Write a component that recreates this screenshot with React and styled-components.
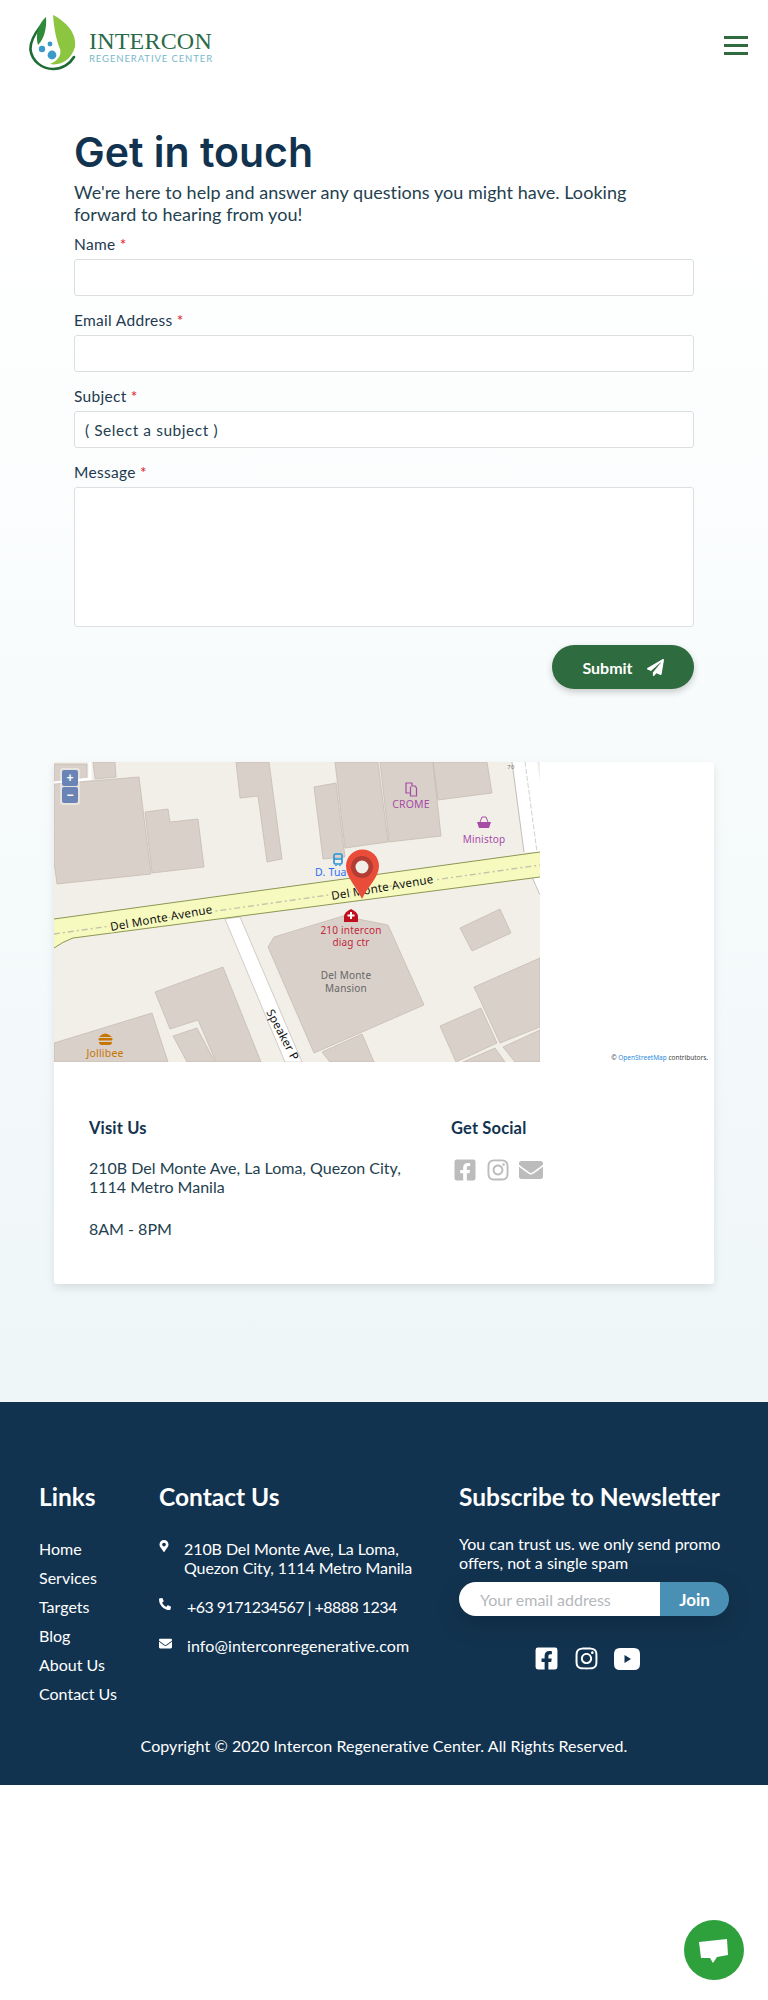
import React from "react";
import styled, { createGlobalStyle } from "styled-components";
import { FaFacebookSquare, FaInstagram, FaEnvelope, FaMapMarkerAlt, FaPhoneAlt, FaPaperPlane } from "react-icons/fa";

const Global = createGlobalStyle`
  html, body { margin: 0; padding: 0; background: #fff; }
  * { box-sizing: border-box; }
  body { font-family: "Lato", "Liberation Sans", sans-serif; color: #12334f; }
`;
const Page = styled.div`width: 768px; background: linear-gradient(180deg, #ffffff 0, #ffffff 200px, #eef6f8 1402px);`;
const Header = styled.header`height: 86px; padding: 14px 20px 0 29px; display: flex; justify-content: space-between; align-items: flex-start;`;
const Logo = styled.div`display: flex; gap: 12px; align-items: flex-start;`;
const LogoText = styled.div`display: flex; flex-direction: column; padding-top: 15px;`;
const LogoName = styled.span`font: 400 24px/24px "Liberation Serif", serif; color: #2a6a48; letter-spacing: 0.2px; white-space: nowrap;`;
const LogoSub = styled.span`font: 400 9.5px/10px "Lato", sans-serif; color: #79b9c9; letter-spacing: 0.9px; white-space: nowrap; margin-top: 1px;`;
const Burger = styled.div`display: flex; flex-direction: column; gap: 5px; margin-top: 22px; width: 24px;`;
const Bar = styled.span`display: block; height: 3px; background: #2f6b3f;`;
const Form = styled.form`padding: 42px 74px 0; display: flex; flex-direction: column;`;
const Title = styled.h1`margin: 0 0 5px; font: 600 41px/48px "Inter", sans-serif; letter-spacing: 0; color: #12334f;`;
const Intro = styled.p`margin: 0 0 9px; max-width: 585px; font: 400 18px/22px "Lato", sans-serif; letter-spacing: 0.05px; color: #24414f;`;
const Field = styled.div`margin-bottom: 15px;`;
const Label = styled.label`display: block; font: 400 15.5px/20px "Lato", sans-serif; letter-spacing: 0.3px; color: #1d3a50; margin-bottom: 5px;`;
const Req = styled.span`color: #e0202a;`;
const Input = styled.input`display: block; width: 100%; height: 37px; margin-bottom: -1px; border: 1px solid #dcdfe2; border-radius: 3px; background: #fff; padding: 0 11px;`;
const Select = styled.select`display: block; width: 100%; height: 37px; margin-bottom: -1px; border: 1px solid #dcdfe2; border-radius: 3px; background: #fff; padding: 0 10px; appearance: none; font: 400 15.5px "Lato", sans-serif; letter-spacing: 0.55px; color: #24414f;`;
const Area = styled.textarea`display: block; width: 100%; height: 140px; border: 1px solid #dcdfe2; border-radius: 3px; background: #fff; resize: none;`;
const Actions = styled.div`display: flex; justify-content: flex-end; margin-top: 3px;`;
const Submit = styled.button`width: 142px; height: 44px; border: 0; border-radius: 22px; background: #2e6b3e; color: #fff; font: 700 16px "Lato", sans-serif; display: flex; align-items: center; justify-content: center; gap: 14px; box-shadow: 0 3px 7px rgba(0,0,0,.2);`;
const Card = styled.section`margin: 73px 54px 118px; background: #fff; border-radius: 3px; box-shadow: 0 4px 8px rgba(0,0,0,.1);`;
const MapBox = styled.div`position: relative; height: 300px;`;
const MapArt = styled.svg`display: block; width: 486px; height: 300px;`;
const Zoom = styled.div`position: absolute; left: 6px; top: 6px; padding: 2px; background: rgba(255,255,255,.4); border-radius: 3px; display: flex; flex-direction: column; gap: 1px;`;
const ZoomBtn = styled.span`display: flex; width: 16px; height: 16px; align-items: center; justify-content: center; background: #6a84b5; color: #fff; font: 700 12px/16px "Liberation Sans", sans-serif; border-radius: 2px;`;
const Attribution = styled.div`position: absolute; right: 6px; bottom: -1px; font: 400 6.5px/10px "Noto Sans", sans-serif; color: #444;`;
const OsmLink = styled.span`color: #2b8de0;`;
const Info = styled.div`display: grid; grid-template-columns: 362px 1fr; padding: 56px 0 46px 35px;`;
const InfoTitle = styled.h3`margin: 0 0 20px; font: 700 16.5px/20px "Lato", sans-serif; letter-spacing: 0.15px; color: #12334f;`;
const InfoText = styled.p`margin: 0 0 23px; font: 400 16px/19px "Lato", sans-serif; color: #24414f; &:last-child { margin-bottom: 0; }`;
const GrayIcons = styled.div`display: flex; gap: 9px; margin: 3px 0 0 2px; color: #bcbcbc; align-items: center; height: 24px;`;
const Footer = styled.footer`background: #12334f; color: #fff; padding: 80px 39px 27px; `;
const Cols = styled.div`display: flex;`;
const LinksCol = styled.div`width: 120px;`;
const ContactCol = styled.div`width: 300px;`;
const SubCol = styled.div`width: 270px;`;
const FootTitle = styled.h3`margin: 0; font: 700 24.5px/30px "Lato", sans-serif; color: #fff; white-space: nowrap;`;
const LinkList = styled.ul`list-style: none; margin: 22px 0 0; padding: 0;`;
const LinkItem = styled.li`font: 400 16px/29px "Lato", sans-serif;`;
const ContactList = styled.div`display: flex; flex-direction: column; gap: 20px; margin-top: 27px;`;
const ContactItem = styled.div`display: flex; gap: 15px; font: 400 16px/19px "Lato", sans-serif; align-items: flex-start; letter-spacing: ${p => p.$track || 0}px; white-space: nowrap;`;
const ContactIcon = styled.span`display: flex; width: ${p => p.$w}px; height: 14px; flex: none; margin-top: 1px;`;
const SubText = styled.p`margin: 22px 0 10px; font: 400 16px/19px "Lato", sans-serif;`;
const Join = styled.div`display: flex; height: 34px; border-radius: 17px; overflow: hidden; box-shadow: 0 8px 24px rgba(0,0,0,.18);`;
const JoinInput = styled.input`width: 201px; border: 0; padding: 0 0 0 21px; font: 400 16px "Lato", sans-serif; &::placeholder { color: #b4b8bc; opacity: 1; }`;
const JoinBtn = styled.button`flex: 1; border: 0; background: #4a90b5; color: #fff; font: 700 17px "Lato", sans-serif;`;
const SocialRow = styled.div`display: flex; justify-content: center; align-items: center; gap: 15px; margin-top: 30px; margin-left: -15px;`;
const Copyright = styled.div`text-align: center; font: 400 16px/24px "Lato", sans-serif; letter-spacing: 0.06px; margin-top: 26px;`;
const Chat = styled.div`position: fixed; right: 24px; bottom: 20px; width: 60px; height: 60px; border-radius: 50%; background: #2ea03c; display: flex;`;

const B = ({ p }) => <polygon points={p} fill="#d9d0c9" stroke="#c2b8ae" strokeWidth="0.7" />;
const L = ({ x, y, c, children, a = "middle", s = 10, halo = "none" }) => (
  <text x={x} y={y} fill={c} fontSize={s} textAnchor={a} fontFamily="Noto Sans, sans-serif" letterSpacing=".2" stroke={halo} strokeWidth={halo === "none" ? 0 : 3} paintOrder="stroke">{children}</text>
);

const MapSvg = () => (
  <MapArt viewBox="0 0 486 300">
    <rect width="486" height="300" fill="#f2efe9" />
    <B p="0,2 33,2 33,18 0,21" />
    <path d="M0 21 L36 17 L36 0" stroke="#fff" strokeWidth="3" fill="none" />
    <B p="39,0 61,0 62,15 41,17" />
    <B p="0,22 85,15 97,112 3,122 0,100" />
    <B p="91,50 114,47 116,60 144,57 150,105 98,111" />
    <B p="182,0 215,0 228,97 213,100 204,34 186,36" />
    <B p="260,25 282,21 291,95 269,97" />
    <B p="281,0 324,0 334,80 291,86" />
    <B p="326,0 379,0 387,74 335,80" />
    <B p="379,0 433,0 438,31 384,38" />
    <B p="101,230 169,205 207,300 162,300 144,258 116,267" />
    <B p="119,274 143,266 161,300 133,300" />
    <B p="0,281 98,251 114,300 0,300" />
    <B p="214,185 220,175 289,154 334,163 370,243 260,291" />
    <B p="268,290 308,272 320,300 276,300" />
    <B p="406,166 446,147 457,171 418,189" />
    <B p="420,225 486,196 486,265 446,281" />
    <B p="386,264 427,246 443,281 402,300" />
    <B p="449,285 486,268 486,300 461,300" />
    <B p="409,300 441,286 451,300" />
    <polygon points="171,157 186,155 248,300 231,300" fill="#fff" stroke="#b5aea6" strokeWidth=".6" />
    <polygon points="458,0 483,0 486,20 486,90 470,90" fill="#fff" />
    <path d="M458 0 L470 90" stroke="#aaa59d" strokeWidth=".7" />
    <path d="M471 0 L483 90" stroke="#bbb" strokeWidth=".7" strokeDasharray="5 2" fill="none" />
    <polygon points="478,115 486,115 486,135" fill="#fff" />
    <path d="M478 115 L486 133" stroke="#aaa59d" strokeWidth=".7" />
    <path d="M0 157 L486 90 L486 115 L19 176 Q8 180 0 186 Z" fill="#f7fabf" />
    <path d="M0 157 L486 90" stroke="#8b9752" strokeWidth="1" fill="none" />
    <path d="M486 115 L19 176 Q8 180 0 186" stroke="#8b9752" strokeWidth="1" fill="none" />
    <path d="M0 172 L486 103" stroke="#c4c4ac" strokeWidth="1.4" strokeDasharray="6 3 2 3" fill="none" />
    <g transform="translate(57 169) rotate(-10)"><L x="0" y="0" a="start" c="#111" s={11.6} halo="#f7fabf">Del Monte Avenue</L></g>
    <g transform="translate(278 138) rotate(-9.5)"><L x="0" y="0" a="start" c="#111" s={11.6} halo="#f7fabf">Del Monte Avenue</L></g>
    <g transform="translate(212 250) rotate(62)"><L x="0" y="0" a="start" c="#111" s={11.6}>Speaker P</L></g>
    <L x="357" y="46" c="#a64ca6" s={10.5}>CROME</L>
    <path d="M352 21 h6 v3 h3 l1.5 2 v8 h-6 v-3 h-4.5 z M356.5 24.5 v9" fill="none" stroke="#a64ca6" strokeWidth="1.2" />
    <L x="430" y="81" c="#a64ca6" s={10}>Ministop</L>
    <path d="M423 60 h14 l-2 6 h-10 z" fill="#a64ca6" /><path d="M426 60 l2-5 M434 60 l-2-5 M428 55 h4" stroke="#a64ca6" strokeWidth="1" fill="none" />
    <L x="261" y="114" a="start" c="#2a6ef0" s={10.5}>D. Tua</L>
    <rect x="280" y="92" width="8" height="10" rx="1.5" fill="none" stroke="#2592d6" strokeWidth="1.6" /><path d="M280 97 h8 M282 103 v1 M286 103 v1" stroke="#2592d6" strokeWidth="1.5" />
    <L x="297" y="172" c="#c2263c" s={10}>210 intercon</L>
    <L x="297" y="184" c="#c2263c" s={10}>diag ctr</L>
    <path d="M290 160 v-5 q0-5 7-8 q7 3 7 8 v5 z" fill="#bf0f1e" /><path d="M297 150 v7 M293.5 153.5 h7" stroke="#fff" strokeWidth="2" />
    <L x="292" y="217" c="#666" s={10}>Del Monte</L>
    <L x="292" y="230" c="#666" s={10}>Mansion</L>
    <path d="M45 275 q6-7 13 0 z M45 280 h13 q0 3-3 3 h-7 q-3 0-3-3 z" fill="#c77400" /><rect x="44.500" y="276" width="14" height="2.500" rx="1" fill="#c77400" />
    <L x="51" y="295" c="#c77400" s={10.5}>Jollibee</L>
    <L x="457" y="7" c="#777" s={6}>70</L>
    <path d="M308 137 C303 125 292 116 292 104 A16.500 16.500 0 0 1 325 104 C325 116 313 125 308 137 Z" fill="#ea4c3a" />
    <circle cx="308" cy="105" r="11" fill="#b13d35" />
    <circle cx="308" cy="105" r="6.500" fill="#f2efe9" />
  </MapArt>
);

const LogoMark = () => (
  <svg width="48" height="57" viewBox="0 0 48 57">
    <path d="M11 13 C4 22 1 29 1.500 36 C3 47 13 55 24 55 C33 55 41 50 45 43" fill="none" stroke="#1f6b35" strokeWidth="2.6" strokeLinecap="round" />
    <path d="M17 3 C9 10 6 21 9 31 C15 25 18 14 17 3 Z" fill="#2f8a3a" />
    <path d="M24 1 C25 14 27 25 31 35 C33 42 28 47 21 50 C32 52 42 46 46 33 C48 20 38 8 24 1 Z" fill="#8cc640" />
    <circle cx="13" cy="35" r="3.200" fill="#3a9cc6" />
    <circle cx="21" cy="30" r="2.400" fill="#3a9cc6" />
    <circle cx="23" cy="41" r="4.400" fill="#3a9cc6" />
  </svg>
);

const YoutubeIcon = () => (
  <svg width="26" height="22" viewBox="0 0 26 22">
    <path fillRule="evenodd" d="M6 0 H20 Q26 0 26 6 V16 Q26 22 20 22 H6 Q0 22 0 16 V6 Q0 0 6 0 Z M10.500 7 V15 L17 11 Z" fill="#fff" />
  </svg>
);

export default function App() {
  return (
    <>
      <Global />
      <Page>
        <Header>
          <Logo>
            <LogoMark />
            <LogoText>
              <LogoName>INTERCON</LogoName>
              <LogoSub>REGENERATIVE CENTER</LogoSub>
            </LogoText>
          </Logo>
          <Burger><Bar /><Bar /><Bar /></Burger>
        </Header>
        <Form onSubmit={e => e.preventDefault()}>
          <Title>Get in touch</Title>
          <Intro>We're here to help and answer any questions you might have. Looking forward to hearing from you!</Intro>
          <Field><Label>Name <Req>*</Req></Label><Input /></Field>
          <Field><Label>Email Address <Req>*</Req></Label><Input /></Field>
          <Field><Label>Subject <Req>*</Req></Label><Select><option>( Select a subject )</option></Select></Field>
          <Field><Label>Message <Req>*</Req></Label><Area /></Field>
          <Actions><Submit>Submit <FaPaperPlane size={17} /></Submit></Actions>
        </Form>
        <Card>
          <MapBox>
            <MapSvg />
            <Zoom><ZoomBtn>+</ZoomBtn><ZoomBtn>−</ZoomBtn></Zoom>
            <Attribution>© <OsmLink>OpenStreetMap</OsmLink> contributors.</Attribution>
          </MapBox>
          <Info>
            <div>
              <InfoTitle>Visit Us</InfoTitle>
              <InfoText>210B Del Monte Ave, La Loma, Quezon City,<br />1114 Metro Manila</InfoText>
              <InfoText>8AM - 8PM</InfoText>
            </div>
            <div>
              <InfoTitle>Get Social</InfoTitle>
              <GrayIcons>
                <FaFacebookSquare size={24} />
                <FaInstagram size={24} />
                <FaEnvelope size={24} />
              </GrayIcons>
            </div>
          </Info>
        </Card>
        <Footer>
          <Cols>
            <LinksCol>
              <FootTitle>Links</FootTitle>
              <LinkList>
                {["Home", "Services", "Targets", "Blog", "About Us", "Contact Us"].map(l => <LinkItem key={l}>{l}</LinkItem>)}
              </LinkList>
            </LinksCol>
            <ContactCol>
              <FootTitle>Contact Us</FootTitle>
              <ContactList>
                <ContactItem $track={-0.08}><ContactIcon $w={10}><FaMapMarkerAlt size={12} /></ContactIcon><span>210B Del Monte Ave, La Loma,<br />Quezon City, 1114 Metro Manila</span></ContactItem>
                <ContactItem $track={-0.55}><ContactIcon $w={13}><FaPhoneAlt size={12} /></ContactIcon><span>+63 9171234567 | +8888 1234</span></ContactItem>
                <ContactItem $track={0.1}><ContactIcon $w={13}><FaEnvelope size={13} /></ContactIcon><span>info@interconregenerative.com</span></ContactItem>
              </ContactList>
            </ContactCol>
            <SubCol>
              <FootTitle>Subscribe to Newsletter</FootTitle>
              <SubText>You can trust us. we only send promo offers, not a single spam</SubText>
              <Join>
                <JoinInput placeholder="Your email address" />
                <JoinBtn>Join</JoinBtn>
              </Join>
              <SocialRow>
                <FaFacebookSquare size={25} />
                <FaInstagram size={25} />
                <YoutubeIcon />
              </SocialRow>
            </SubCol>
          </Cols>
          <Copyright>Copyright © 2020 Intercon Regenerative Center. All Rights Reserved.</Copyright>
        </Footer>
      </Page>
      <Chat>
        <svg width="60" height="60" viewBox="0 0 60 60"><polygon points="15,22 43,19 44,35 33,37 29,43 26,38 17,38" fill="#fff" /></svg>
      </Chat>
    </>
  );
}
